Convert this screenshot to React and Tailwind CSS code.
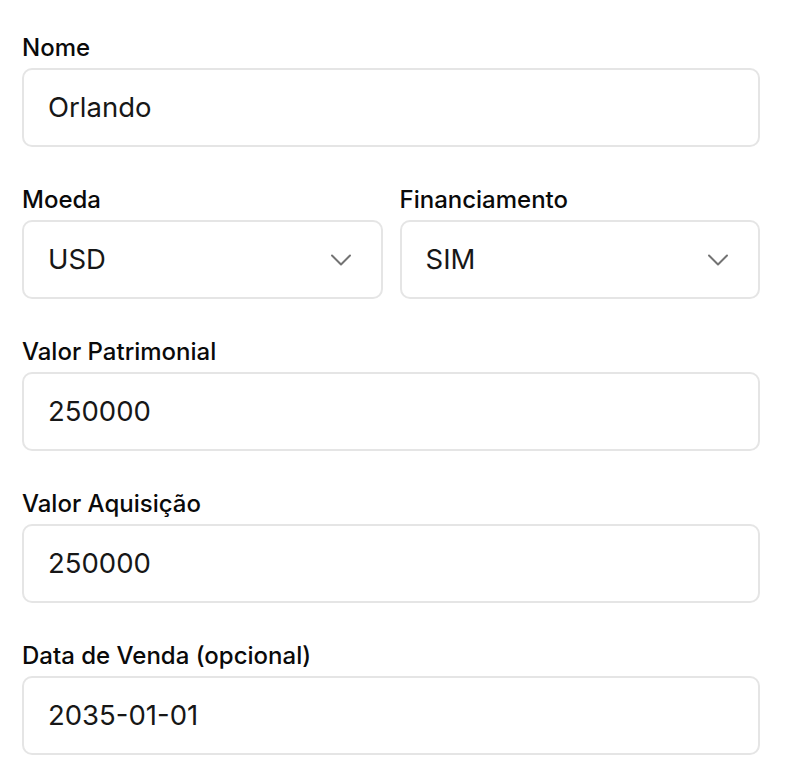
import React from "react";

function Field({ label, value, select }) {
    return (
        <div className="flex flex-col">
            <label className="text-[24px] leading-[30px] font-medium text-[#0a0a0a]">
                {label}
            </label>
            <div className="mt-[5px] h-[79px] rounded-[10px] border-2 border-[#e5e5e5] bg-white flex items-center justify-between pl-[24px] pr-[29px]">
                <span className="text-[27.5px] font-normal text-[#171717]">{value}</span>
                {select && (
                    <svg
                        viewBox="0 0 22 12"
                        className="w-[22px] h-[12px] text-[#737373]"
                        fill="none"
                        stroke="currentColor"
                        strokeWidth="2"
                        strokeLinecap="round"
                        strokeLinejoin="round"
                    >
                        <path d="M2 1.5l9 9 9-9" />
                    </svg>
                )}
            </div>
        </div>
    );
}

export default function App() {
    return (
        <div
            className="bg-white w-[782px] min-h-[772px] pt-[33px] px-[22px] flex flex-col gap-[38px]"
            style={{ fontFamily: "Inter, 'Liberation Sans', sans-serif" }}
        >
            <Field label="Nome" value="Orlando" />
            <div className="grid grid-cols-2 gap-[17px]">
                <Field label="Moeda" value="USD" select />
                <Field label="Financiamento" value="SIM" select />
            </div>
            <Field label="Valor Patrimonial" value="250000" />
            <Field label="Valor Aquisição" value="250000" />
            <Field label="Data de Venda (opcional)" value="2035-01-01" />
        </div>
    );
}
